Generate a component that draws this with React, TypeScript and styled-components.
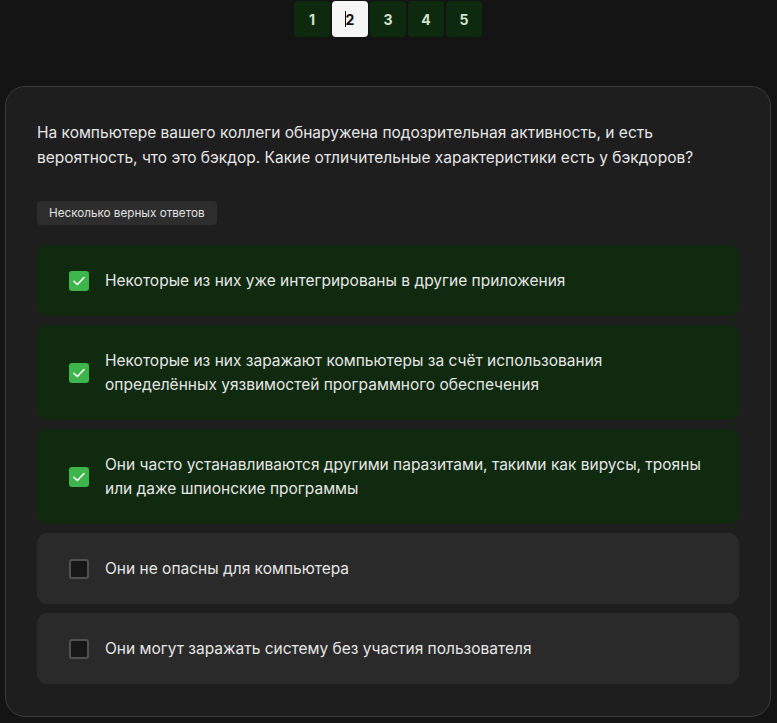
import React from "react";
import styled, { createGlobalStyle } from "styled-components";

const Global = createGlobalStyle`
  html, body { margin: 0; padding: 0; background: #141414; }
  body { font-family: Inter, "Noto Sans", "Liberation Sans", sans-serif; color: #e4e4e4; }
  * { box-sizing: border-box; }
`;

const Page = styled.div`
  width: 777px;
  min-height: 723px;
  display: flex;
  flex-direction: column;
  align-items: stretch;
  padding: 1px 6px 6px 5px;
`;

const Pager = styled.div`
  display: flex;
  justify-content: center;
  gap: 2px;
`;

const PageBtn = styled.button<{ $active?: boolean }>`
  position: relative;
  width: 36px;
  height: 36px;
  border: none;
  border-radius: 4px;
  background: ${(p) => (p.$active ? "#f5f5f5" : "#0e2a0e")};
  color: ${(p) => (p.$active ? "#111" : "#d4e2cc")};
  font-family: Inter, "Noto Sans", sans-serif;
  font-weight: 700;
  font-size: 14px;
  padding: 0;
  cursor: pointer;
`;

const Caret = styled.span`
  position: absolute;
  left: 13px;
  top: 10px;
  width: 1px;
  height: 16px;
  background: #000;
`;

const Card = styled.section`
  margin-top: 49px;
  background: #1e1e1e;
  border: 1px solid #3a3a3a;
  border-radius: 20px;
  padding: 31px 31px 32px 31px;
  display: flex;
  flex-direction: column;
`;

const Question = styled.p`
  margin: 0;
  font-size: 15.5px;
  line-height: 25px;
  color: #e6e6e6;
  padding-top: 2px;
  padding-right: 20px;
`;

const Tag = styled.span`
  align-self: flex-start;
  margin-top: 31px;
  background: #2d2d2d;
  color: #e0e0e0;
  font-size: 11.7px;
  line-height: 24px;
  height: 24px;
  padding: 0 12px;
  border-radius: 4px;
`;

const Options = styled.div`
  margin-top: 20px;
  display: flex;
  flex-direction: column;
  gap: 9px;
`;

const Option = styled.label<{ $checked?: boolean }>`
  display: flex;
  align-items: center;
  gap: 16px;
  padding: 23.5px 32px;
  min-height: 71px;
  border-radius: 10px;
  background: ${(p) => (p.$checked ? "#0f2a0f" : "#2a2a2a")};
  cursor: pointer;
`;

const Box = styled.span<{ $checked?: boolean }>`
  flex: 0 0 20px;
  width: 20px;
  height: 20px;
  border-radius: 3px;
  display: flex;
  align-items: center;
  justify-content: center;
  background: ${(p) => (p.$checked ? "#3db54a" : "#171717")};
  border: ${(p) => (p.$checked ? "none" : "2px solid #505050")};
`;

const OptText = styled.span`
  max-width: 604px;
  font-size: 15.5px;
  line-height: 24px;
  color: #e6e6e6;
`;

const Check = () => (
  <svg width="14" height="14" viewBox="0 0 14 14" fill="none">
    <path d="M2 7.3 L5.4 10.5 L12 3.5" stroke="#fff" strokeWidth="1.6" strokeLinecap="round" strokeLinejoin="round" />
  </svg>
);

const options = [
  { text: "Некоторые из них уже интегрированы в другие приложения", checked: true },
  { text: "Некоторые из них заражают компьютеры за счёт использования определённых уязвимостей программного обеспечения", checked: true },
  { text: "Они часто устанавливаются другими паразитами, такими как вирусы, трояны или даже шпионские программы", checked: true },
  { text: "Они не опасны для компьютера", checked: false },
  { text: "Они могут заражать систему без участия пользователя", checked: false },
];

export default function App() {
  return (
    <>
      <Global />
      <Page>
        <Pager>
          {[1, 2, 3, 4, 5].map((n) => (
            <PageBtn key={n} $active={n === 2}>
              {n === 2 && <Caret />}
              {n}
            </PageBtn>
          ))}
        </Pager>
        <Card>
          <Question>
            На компьютере вашего коллеги обнаружена подозрительная активность, и есть вероятность, что это бэкдор. Какие отличительные характеристики есть у бэкдоров?
          </Question>
          <Tag>Несколько верных ответов</Tag>
          <Options>
            {options.map((o, i) => (
              <Option key={i} $checked={o.checked}>
                <Box $checked={o.checked}>{o.checked && <Check />}</Box>
                <OptText>{o.text}</OptText>
              </Option>
            ))}
          </Options>
        </Card>
      </Page>
    </>
  );
}
